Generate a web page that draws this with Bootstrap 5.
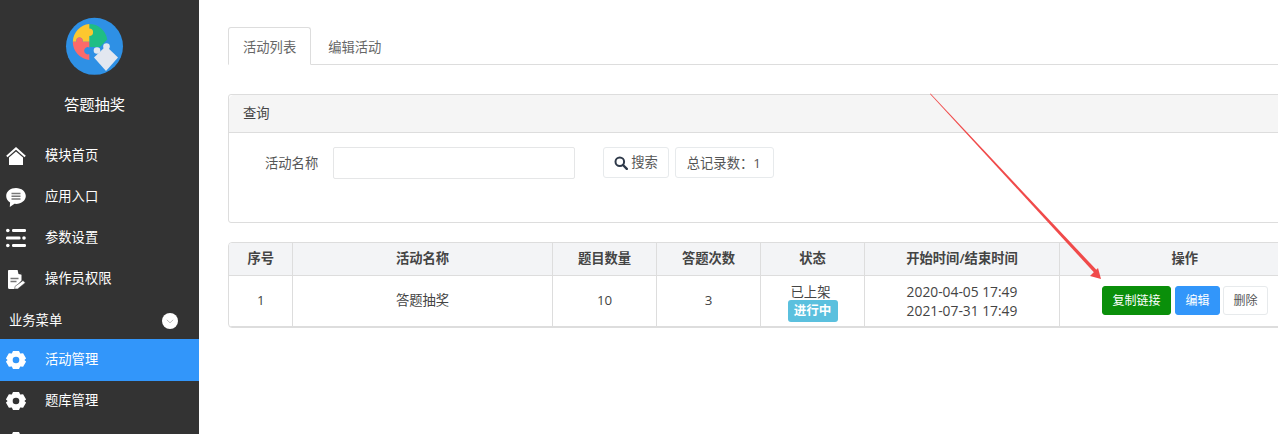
<!DOCTYPE html>
<html lang="zh">
<head>
<meta charset="utf-8">
<title>答题抽奖</title>
<link href="https://cdn.jsdelivr.net/npm/bootstrap@5.3.0/dist/css/bootstrap.min.css" rel="stylesheet">
<style>
html,body{height:434px;overflow:hidden}
body{font-family:"Open Sans","Noto Sans CJK SC",sans-serif;font-size:13.3px;color:#444;background:#fff;position:relative}
.app-shell{height:434px}
.side-bar{width:199px;flex:none;background:#333;color:#fff;overflow:hidden}
.brand-box{padding-top:16px;height:135px}
.brand-box svg{display:block;margin:0 auto 0 64px}
.brand-name{font-size:15.3px;line-height:20px;margin-top:18px;text-align:center;padding-right:10px;color:#fff}
.side-item{height:41px;padding-left:6px;gap:19px;color:#fff;text-decoration:none;font-size:13.3px}
.side-item svg{flex:none;width:20px;height:20px}
.side-item.is-on{height:42px;background:#3296fa}
.side-item.is-tight{padding-bottom:1px}
.side-item.is-clipped{padding-bottom:3px}
.side-group{height:40px;padding:4px 21px 0 9px;font-size:13.3px}
.main-pane{width:1111px;flex:none;padding:27px 0 0 29px}
.main-pane .nav-tabs{border-color:#ddd;height:38px;width:1082px}
.main-pane .nav-link{color:#666;padding:9px 14px;height:38px;line-height:20px;font-size:13.3px;border-radius:3px 3px 0 0;margin-right:2px;border-color:transparent}
.main-pane .nav-link.active{color:#666;border-color:#ddd #ddd #fff}
.query-panel{margin-top:29px;height:129px;width:1082px;border-color:#ddd;border-radius:3px}
.query-panel .card-header{background:#f5f5f5;border-color:#ddd;height:38px;padding:0 14px;line-height:37px;font-size:13.3px;color:#444}
.query-panel .card-body{padding:14px 0 0 36px}
.field-label{font-size:13.3px;color:#555;line-height:32px;margin-right:15px}
.query-input{width:242px;height:32px;border:1px solid #e5e6e7;border-radius:2px;padding:0 8px;font-size:13px;margin-right:28px}
.ghost-btn{height:31px;border:1px solid #e7eaec;border-radius:3px;background:#fff;color:#555;font-size:13.3px;padding:0 10px;line-height:29px;gap:3px}
.ghost-btn+.ghost-btn{margin-left:6px;padding:0 12px 0 11px}
.wide-colon{font-family:"Noto Sans CJK TC",sans-serif}
.data-box{margin-top:19px;border:1px solid #ddd;border-radius:4px;overflow:hidden;width:1082px}
.data-box .table{margin:0;table-layout:fixed;width:100%;--bs-table-border-color:#ddd}
.data-box thead tr{border-top:0}
.data-box th,.data-box td{text-align:center;vertical-align:middle;border-left:0;border-top:0;padding:0 0 0 1px;color:#444;font-size:13.3px}
.data-box th{background:#f3f4f6;height:32px;font-weight:600}
.data-box td{height:51px;border-bottom:0;line-height:19px}
.data-box tr>*:last-child{border-right:0}
.date-cell{font-size:13.8px!important}
.shelf-text{display:block;padding:3px 4px 0 0}
.live-tag{display:block;width:50px;height:22px;margin:-2px auto 0;background:#5bc0de;border-radius:3px;color:#fff;font-size:12.5px;font-weight:700;line-height:21px;padding:0}
.act-row{padding-right:41px;justify-content:flex-end}
.act-btn{height:29px;padding:0;font-size:12px;line-height:27px;border-radius:3px}
.btn-copy{width:69px;margin-right:4px;background:#0a8f0a;border-color:#0a8f0a;color:#fff}
.btn-edit{width:45px;margin-right:3px;background:#3296fa;border-color:#3296fa;color:#fff}
.btn-del{width:45px;background:#fff;border-color:#e7eaec;color:#555}
.arrow-mark{position:absolute;left:0;top:0;pointer-events:none}
</style>
</head>
<body>
<div class="app-shell d-flex">
  <aside class="side-bar">
    <div class="brand-box">
      <svg width="60" height="60" viewBox="64 16 60 60" aria-hidden="true">
        <circle cx="94.500" cy="46.300" r="28.500" fill="#2e90e5"/>
        <path d="M89.300 24A18.300 18.300 0 0 1 107.300 39.500L100 47H89.300Z" fill="#1fbd85"/>
        <path d="M89.300 24A18.300 18.300 0 0 0 72.800 41.700H76.500a3.200 3.200 0 1 1 6 0H89.300V36a3.600 3.600 0 1 0 0-7.500Z" fill="#fdc72f"/>
        <path d="M72.800 41.700H76.500a3.200 3.200 0 1 1 6 0H89.300V47.500a3.600 3.600 0 1 0 0 6.500V60A18.300 18.300 0 0 1 72.800 41.700Z" fill="#fc6a6a"/>
        <path d="M94 57.500 106 71 118 57.500 106 46Z" fill="#e2e7f0"/>
        <circle cx="97" cy="50.500" r="3.300" fill="#e2e7f0"/>
        <circle cx="106.500" cy="46.500" r="3.300" fill="#e2e7f0"/>
      </svg>
      <div class="brand-name">答题抽奖</div>
    </div>
    <a class="side-item d-flex align-items-center" href="#">
      <svg viewBox="0 0 20 20" fill="#fff"><path d="M10 1 .2 9.800l1.300 1.500L10 3.800l8.500 7.500 1.300-1.500Z"/><path d="M10 5.500 3 11.600V19h14v-7.400Z"/></svg>
      <span>模块首页</span></a>
    <a class="side-item d-flex align-items-center" href="#">
      <svg viewBox="0 0 20 20"><path fill="#fff" d="M10 1C4.500 1 .2 4.500.2 9c0 2.700 1.500 5 3.900 6.400L3.800 20l4.700-3.200c.5.100 1 .1 1.500.1 5.500 0 9.800-3.500 9.800-7.900S15.500 1 10 1Z"/><path stroke="#777" stroke-width="1.500" d="M5.500 6.500h9M5.500 9.300h9M5.500 12h9"/></svg>
      <span>应用入口</span></a>
    <a class="side-item d-flex align-items-center" href="#">
      <svg viewBox="0 0 20 20" fill="#fff"><circle cx="1.800" cy="2.500" r="1.800"/><rect x="6" y="1" width="14" height="3" rx="1.200"/><rect y="8.500" width="14.500" height="3" rx="1.200"/><circle cx="18" cy="10" r="1.800"/><circle cx="1.800" cy="17.500" r="1.800"/><rect x="6" y="16" width="14" height="3" rx="1.200"/></svg>
      <span>参数设置</span></a>
    <a class="side-item d-flex align-items-center" href="#">
      <svg viewBox="0 0 20 20"><path fill="#fff" d="M2.500 1h9.500l3.500 4v6.500L9.500 18 9 20H3.500a1.500 1.500 0 0 1-1.500-1.500V2.500A1.500 1.500 0 0 1 2.500 1Z"/><path fill="#333" d="M11.500 .5 12.500 5 16 5.800V5L12.500 .5Z"/><path stroke="#777" stroke-width="1.300" d="M4.500 9.500h8M4.500 12.500h6"/><path fill="#fff" stroke="#333" stroke-width=".5" d="m17 11.500 2.300 2.200-7.600 6.200-3 .1.300-2.600Z"/></svg>
      <span>操作员权限</span></a>
    <div class="side-group d-flex align-items-center justify-content-between">
      <span>业务菜单</span>
      <svg width="16" height="16" viewBox="0 0 16 16"><circle cx="8" cy="8" r="8" fill="#fff"/><path d="m4.800 6.800 3.200 3 3.200-3" fill="none" stroke="#bbb" stroke-width="1"/></svg>
    </div>
    <a class="side-item is-on d-flex align-items-center" href="#">
      <svg viewBox="0 0 20 20"><use href="#gear-mark"/><circle cx="10" cy="10" r="3.300" fill="#3296fa"/></svg>
      <span>活动管理</span></a>
    <a class="side-item is-tight d-flex align-items-center" href="#">
      <svg viewBox="0 0 20 20"><use href="#gear-mark"/><circle cx="10" cy="10" r="3.300" fill="#333"/></svg>
      <span>题库管理</span></a>
    <div class="side-item is-clipped d-flex align-items-center">
      <svg viewBox="0 0 20 20"><use href="#gear-mark"/><circle cx="10" cy="10" r="3.300" fill="#333"/></svg>
    </div>
  </aside>
  <main class="main-pane">
    <ul class="nav nav-tabs">
      <li class="nav-item"><a class="nav-link active" href="#">活动列表</a></li>
      <li class="nav-item"><a class="nav-link" href="#">编辑活动</a></li>
    </ul>
    <div class="card query-panel">
      <div class="card-header">查询</div>
      <div class="card-body d-flex align-items-start">
        <span class="field-label">活动名称</span>
        <input class="query-input" type="text" aria-label="活动名称">
        <span class="ghost-btn d-inline-flex align-items-center">
          <svg width="14" height="14" viewBox="0 0 14 14"><circle cx="5.800" cy="5.800" r="4.300" fill="none" stroke="#2f3a4a" stroke-width="2"/><path d="m9 9 3.800 3.800" stroke="#2f3a4a" stroke-width="2.400" stroke-linecap="round"/></svg>搜索</span>
        <span class="ghost-btn">总记录数<span class="wide-colon">：</span>1</span>
      </div>
    </div>
    <div class="data-box">
      <table class="table table-bordered">
        <colgroup><col style="width:63px"><col style="width:260px"><col style="width:104px"><col style="width:104px"><col style="width:104px"><col style="width:195px"><col></colgroup>
        <thead><tr><th>序号</th><th>活动名称</th><th>题目数量</th><th>答题次数</th><th>状态</th><th>开始时间/结束时间</th><th>操作</th></tr></thead>
        <tbody><tr>
          <td>1</td><td>答题抽奖</td><td>10</td><td>3</td>
          <td><span class="shelf-text">已上架</span><span class="live-tag">进行中</span></td>
          <td class="date-cell">2020-04-05 17:49<br>2021-07-31 17:49</td>
          <td><div class="act-row d-flex">
            <button class="btn act-btn btn-copy" type="button">复制链接</button>
            <button class="btn act-btn btn-edit" type="button">编辑</button>
            <button class="btn act-btn btn-del" type="button">删除</button>
          </div></td>
        </tr></tbody>
      </table>
    </div>
  </main>
</div>
<svg class="arrow-mark" width="1278" height="434" viewBox="0 0 1278 434" aria-hidden="true">
  <polygon points="930,94 930.500,93.600 1097.500,271 1095,273.500" fill="#f04a4a"/>
  <polygon points="1101,279 1090,276 1098,268" fill="#f04a4a"/>
</svg>
<svg width="0" height="0" style="position:absolute" aria-hidden="true"><defs>
  <path id="gear-mark" fill="#fff" d="M7 1h6l1.200 2.600 2.900-.3 3 5-1.700 1.700 1.700 1.700-3 5-2.900-.3L13 19H7l-1.200-2.600-2.900.3-3-5L1.600 10 -.1 8.300l3-5 2.900.3Z"/>
</defs></svg>
<script src="https://cdn.jsdelivr.net/npm/bootstrap@5.3.0/dist/js/bootstrap.bundle.min.js"></script>
</body>
</html>
